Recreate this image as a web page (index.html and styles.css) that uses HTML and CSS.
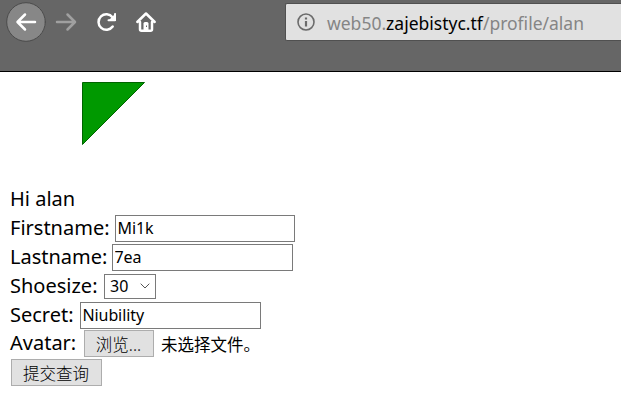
FILE: index.html
```html
<!DOCTYPE html>
<html lang="zh-CN">
<head>
<meta charset="utf-8">
<title>Profile</title>
<link rel="stylesheet" href="styles.css">
</head>
<body>
<header class="toolbar">
  <nav class="nav">
    <svg width="170" height="44" viewBox="0 0 170 44" fill="none" stroke="#fff" stroke-width="2.5" stroke-linecap="round" stroke-linejoin="round">
      <circle cx="26" cy="22" r="19.3" fill="#878787" stroke="#4b4b4b" stroke-width="1"/>
      <path d="M35 22H18M25 14.5L17.5 22L25 29.5"/>
      <path stroke="#a0a0a0" d="M57 22H74M67.5 14.5L75 22L67.5 29.5"/>
      <path d="M112.5 17.2A7.8 7.8 0 1 0 112.7 26.5"/>
      <path d="M115 14V20.2H108.5" stroke-width="2"/>
      <path fill="#fff" stroke="none" d="M116 13v8h-8z"/>
      <path d="M137.3 22L146 13.5L154.7 22M140 22V29.2Q140 30.7 141.5 30.7H150.5Q152 30.7 152 29.2V22"/>
      <path fill="#fff" stroke="none" d="M143.5 31V23.5Q143.5 22 145 22H147Q148.5 22 148.5 23.5V31z"/>
      <path fill="#666" stroke="none" d="M146 25.5h1v1.5h-1z"/>
    </svg>
  </nav>
  <div class="address">
    <svg width="18" height="18" viewBox="0 0 18 18" fill="none" stroke="#6b6b6b">
      <circle cx="9" cy="9" r="8" stroke-width="1.6"/>
      <path stroke-width="2.2" d="M9 8V13.5M9 4.5V6.6"/>
    </svg>
    <div class="url"><span class="sub">web50.</span><span class="host">zajebistyc.tf</span><span class="path">/profile/alan</span></div>
  </div>
</header>
<main>
  <svg class="avatar" width="64" height="64" viewBox="0 0 64 64"><path d="M.5 .5H62.5L.5 62.5z" fill="#090" stroke="#006400"/></svg>
  <form>
    <div class="row"><span class="label hi">Hi alan</span></div>
    <div class="row"><label class="label first" for="f">Firstname:</label><input id="f" class="text" value="Mi1k"></div>
    <div class="row"><label class="label last" for="l">Lastname:</label><input id="l" class="text wide" value="7ea"></div>
    <div class="row"><label class="label shoe">Shoesize:</label><div class="select"><span>30</span><svg width="10" height="6" viewBox="0 0 10 6" fill="none" stroke="#555"><path d="M.7 .7L5 5L9.3 .7"/></svg></div></div>
    <div class="row"><label class="label secret" for="s">Secret:</label><input id="s" class="text wide" value="Niubility"></div>
    <div class="row"><span class="label photo">Avatar:</span><button type="button" class="browse">浏览...</button><span class="none">未选择文件。</span></div>
    <div class="row"><button type="button" class="submit">提交查询</button></div>
  </form>
</main>
</body>
</html>
```
FILE: styles.css
```css
* { box-sizing: border-box; }
body {
  margin: 0;
  background: #fff;
  color: #000;
  font-family: "Noto Sans", "Noto Sans CJK SC", sans-serif;
  overflow: hidden;
}
svg { display: block; flex: none; }
.toolbar {
  height: 72px;
  background: #666;
  border-bottom: 1px solid #000;
  display: flex;
  align-items: flex-start;
}
.nav { width: 285px; }
.address {
  flex: 1;
  height: 38px;
  margin-top: 3px;
  padding-left: 11px;
  background: #e1e1e1;
  border: 1px solid #505050;
  border-right: 0;
  border-radius: 2px 0 0 2px;
  display: flex;
  align-items: center;
  gap: 12px;
}
.url {
  padding-top: 1px;
  color: #858585;
  font-size: 17.5px;
  line-height: 24px;
  white-space: nowrap;
}
.host { color: #000; }
main { padding: 10px 11px; }
.avatar { margin-left: 71px; }
form { margin-top: 39.5px; }
.row {
  height: 28.8px;
  display: flex;
  align-items: center;
}
.label {
  flex: none;
  margin-left: -1px;
  padding-bottom: 1px;
  font-size: 20px;
  line-height: 28px;
  white-space: nowrap;
}
.first { width: 105px; }
.last { width: 102px; }
.shoe { width: 94px; }
.secret { width: 70px; }
.photo { width: 74px; }
.text {
  width: 180px;
  height: 27px;
  border: 1px solid #7a7a7a;
  padding: 0 2px 1px 1.5px;
  font: 16px "Noto Sans", sans-serif;
  letter-spacing: -0.1px;
  color: #000;
  outline: 0;
}
.wide { width: 181px; }
.select {
  width: 52px;
  height: 25px;
  border: 1px solid #7a7a7a;
  padding: 0 5px;
  display: flex;
  align-items: center;
  justify-content: space-between;
  font-size: 16px;
}
button {
  height: 27px;
  border: 1px solid #adadad;
  background: #e1e1e1;
  padding: 0 1px 0 0;
  color: #000;
  font: 16.5px "Noto Sans CJK SC", sans-serif;
  font-weight: 300;
  line-height: 24px;
}
.browse { width: 70px; }
.submit { width: 91px; }
.none {
  margin-left: 7px;
  font: 16.5px "Noto Sans CJK SC", sans-serif;
}
```
